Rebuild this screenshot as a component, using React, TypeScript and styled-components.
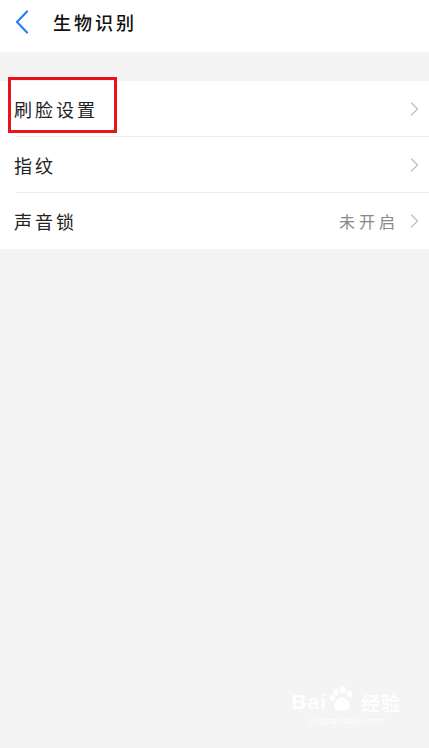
import React from "react";
import styled, { createGlobalStyle } from "styled-components";

const Global = createGlobalStyle`
  html, body { margin: 0; padding: 0; background: #f4f4f4; }
  body { font-family: "Noto Sans CJK SC", "Noto Sans", sans-serif; }
`;

const Page = styled.div`
  position: relative;
  width: 429px;
  height: 748px;
  background: #f4f4f4;
  overflow: hidden;
`;

const Header = styled.header`
  height: 52px;
  background: #ffffff;
  display: flex;
  align-items: center;
  padding-left: 15px;
  box-sizing: border-box;
`;

const Back = styled.div`
  width: 20px;
  height: 26px;
  display: flex;
  align-items: center;
  margin-right: 18px;
  margin-top: -8px;
`;

const Title = styled.h1`
  margin: 0;
  font-size: 18px;
  font-weight: 500;
  color: #111;
  letter-spacing: 3px;
  margin-top: -8px;
`;

const List = styled.div`
  margin-top: 29px;
  background: #ffffff;
`;

const Row = styled.div<{ $last?: boolean }>`
  position: relative;
  height: 56px;
  display: flex;
  align-items: center;
  padding: 0 10px 0 14px;
  box-sizing: border-box;
  &::after {
    content: "";
    position: absolute;
    left: 16px;
    right: 0;
    bottom: 0;
    height: 1px;
    background: ${(p) => (p.$last ? "transparent" : "#ececec")};
  }
`;

const Label = styled.span`
  flex: 1;
  font-size: 18px;
  font-weight: 400;
  color: #222;
  letter-spacing: 3px;
`;

const Highlight = styled.div`
  position: absolute;
  left: 8px;
  top: 77px;
  width: 109px;
  height: 56px;
  border: 3px solid #e8141c;
  box-sizing: border-box;
`;

const Value = styled.span`
  font-size: 16px;
  color: #888;
  letter-spacing: 4px;
  margin-right: 10px;
`;

const Chevron = () => (
  <svg width="10" height="16" viewBox="0 0 10 16">
    <path d="M2 1.5 L8.5 8 L2 14.5" fill="none" stroke="#c7c7c7" strokeWidth="1.6" />
  </svg>
);

const Watermark = styled.div`
  position: absolute;
  right: 28px;
  bottom: 22px;
  text-align: center;
  color: rgba(255, 255, 255, 0.95);
  font-family: "Liberation Sans", sans-serif;
`;

const WmTop = styled.div`
  display: flex;
  align-items: flex-end;
  gap: 2px;
  font-size: 21px;
  font-weight: 700;
  letter-spacing: 1px;
  line-height: 1;
`;

const WmCjk = styled.span`
  font-family: "Noto Sans CJK SC", sans-serif;
  font-size: 19px;
  margin-left: 4px;
`;

const WmBottom = styled.div`
  font-size: 10px;
  margin-top: 3px;
  font-family: "Liberation Serif", serif;
`;

const Paw = () => (
  <svg width="26" height="26" viewBox="0 0 26 26" fill="rgba(255,255,255,0.95)">
    <ellipse cx="7" cy="6" rx="3" ry="3.6" />
    <ellipse cx="14" cy="4" rx="3" ry="3.6" />
    <ellipse cx="20.5" cy="8" rx="2.8" ry="3.3" />
    <ellipse cx="3.5" cy="12" rx="2.6" ry="3.1" />
    <path d="M13 11 C8 11 4 18 5 22 C6 25.5 20 25.5 21 22 C22 18 18 11 13 11 Z" />
  </svg>
);

const rows = [
  { label: "刷脸设置" },
  { label: "指纹" },
  { label: "声音锁", value: "未开启" },
];

export default function App() {
  return (
    <Page>
      <Global />
      <Header>
        <Back>
          <svg width="14" height="24" viewBox="0 0 14 24">
            <path d="M12 1.5 L2 12 L12 22.5" fill="none" stroke="#2a7ff3" strokeWidth="2.2" strokeLinecap="round" strokeLinejoin="round" />
          </svg>
        </Back>
        <Title>生物识别</Title>
      </Header>
      <List>
        {rows.map((r, i) => (
          <Row key={r.label} $last={i === rows.length - 1}>
            <Label>{r.label}</Label>
            {r.value && <Value>{r.value}</Value>}
            <Chevron />
          </Row>
        ))}
      </List>
      <Highlight />
      <Watermark>
        <WmTop>
          <span>Bai</span>
          <Paw />
          <WmCjk>经验</WmCjk>
        </WmTop>
        <WmBottom>jingyan.baidu.com</WmBottom>
      </Watermark>
    </Page>
  );
}
